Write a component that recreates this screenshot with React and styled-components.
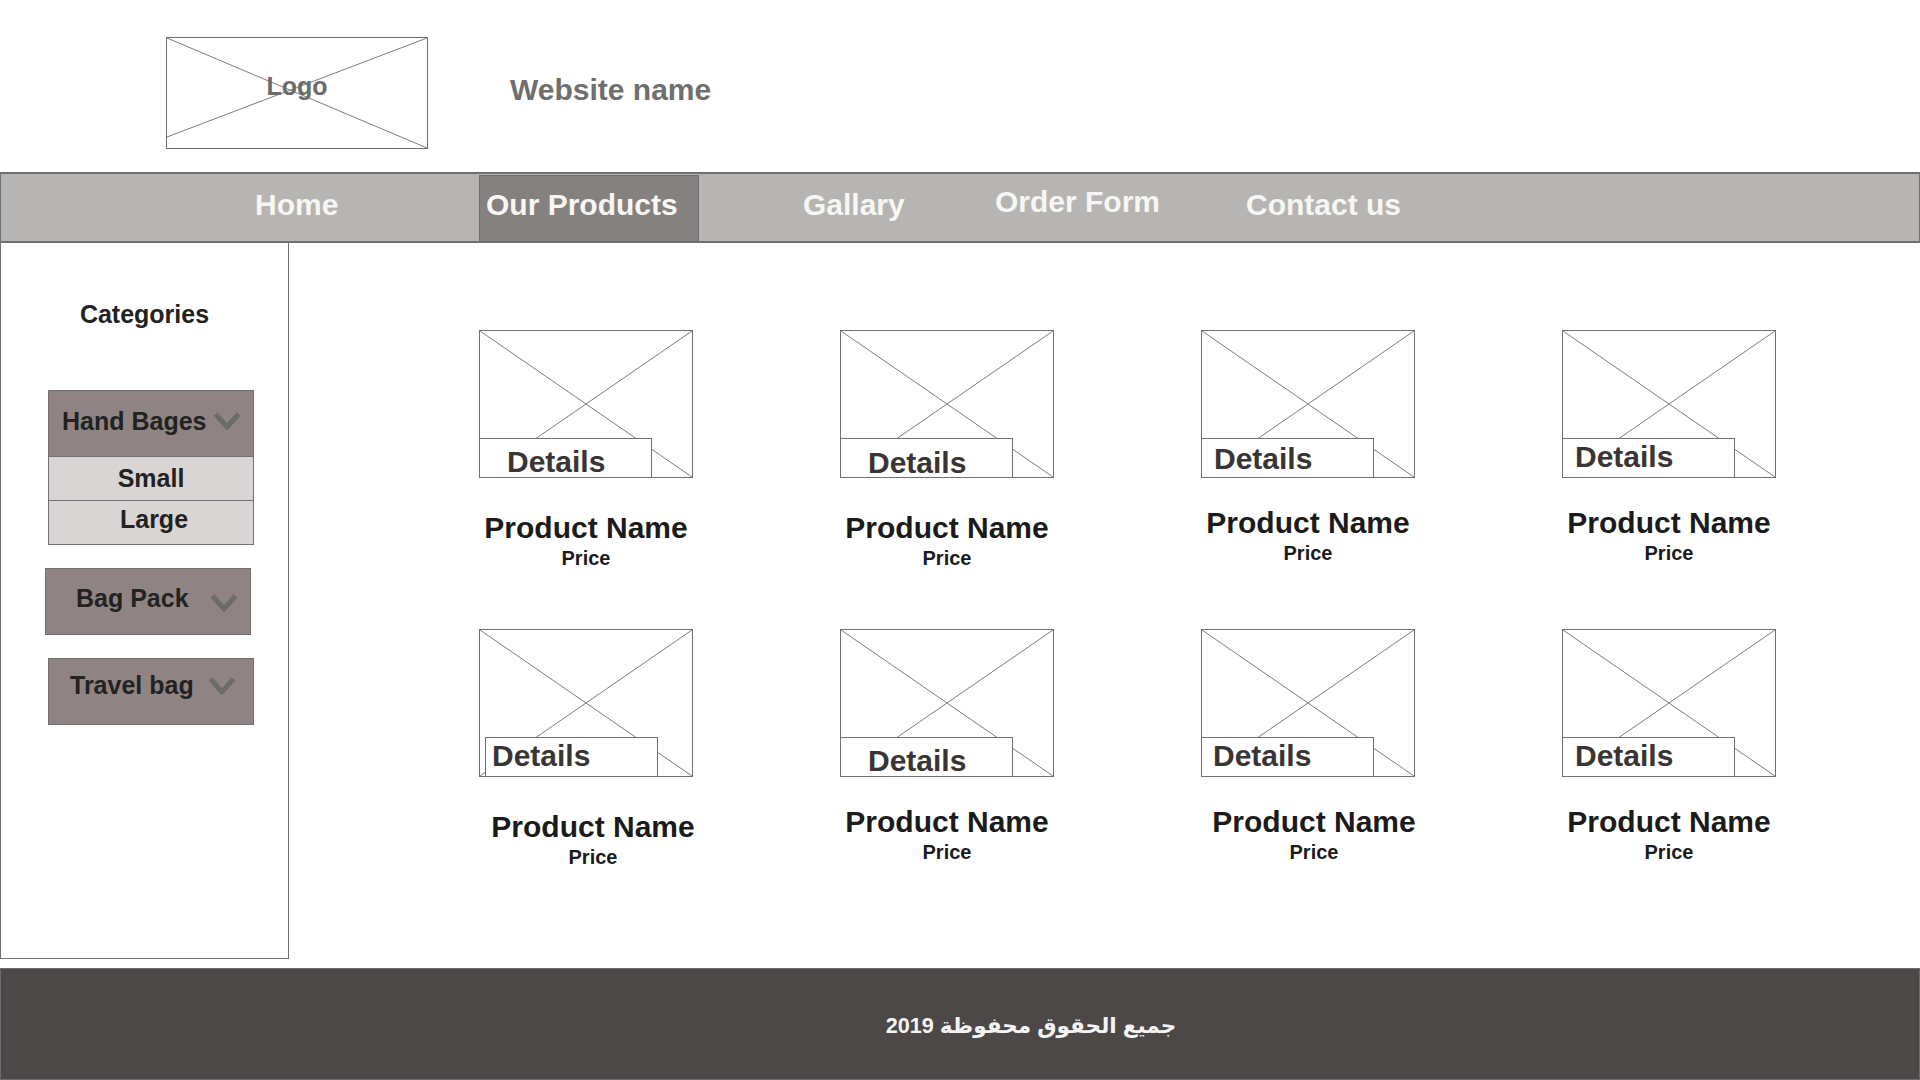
import React from 'react';
import styled, { createGlobalStyle } from 'styled-components';

const GlobalStyle = createGlobalStyle`
  html, body { margin: 0; padding: 0; background: #ffffff; }
  body { font-family: "Liberation Sans", Arial, sans-serif; }
  *, *::before, *::after { box-sizing: border-box; }
`;

const Page = styled.div`
  width: 1920px;
  height: 1080px;
  display: flex;
  flex-direction: column;
  overflow: hidden;
`;

const Header = styled.header`
  height: 172px;
  flex-shrink: 0;
  display: flex;
  align-items: flex-start;
  padding: 37px 0 0 166px;
`;

const LogoBox = styled.div`
  position: relative;
  width: 262px;
  height: 112px;
  border: 1px solid #6e6e6e;
  display: flex;
  align-items: center;
  justify-content: center;
  padding-bottom: 14px;
`;

const CrossSvg = styled.svg`
  position: absolute;
  inset: 0;
  width: 100%;
  height: 100%;
  overflow: visible;
`;

const LogoText = styled.span`
  position: relative;
  font-size: 25px;
  font-weight: 700;
  line-height: 30px;
  color: #6b6b6b;
`;

const SiteName = styled.h1`
  margin: 35.5px 0 0 82px;
  font-size: 30px;
  font-weight: 700;
  line-height: 34px;
  color: #6f6f6f;
  white-space: nowrap;
`;

const NavBar = styled.nav`
  height: 71px;
  flex-shrink: 0;
  display: flex;
  align-items: stretch;
  padding: 1px 0 0 254px;
  background: #b6b5b3;
  border-top: 2px solid #6f6f6f;
  border-bottom: 2px solid #6f6f6f;
  border-left: 1px solid #6f6f6f;
  border-right: 1px solid #6f6f6f;
`;

const NavItem = styled.a`
  display: flex;
  align-items: center;
  flex-shrink: 0;
  width: ${p => (p.$w ? `${p.$w}px` : 'auto')};
  padding-left: ${p => p.$pl || 0}px;
  padding-bottom: ${p => 7 + (p.$raise || 0) * 2}px;
  font-size: 30px;
  font-weight: 700;
  line-height: 34px;
  color: #f7f6f3;
  text-decoration: none;
  white-space: nowrap;
  background: ${p => (p.$active ? '#858180' : 'transparent')};
  border: ${p => (p.$active ? '1px solid #6d6d6d' : '0')};
  border-bottom: 0;
`;

const Main = styled.main`
  display: flex;
  height: 716px;
  flex-shrink: 0;
`;

const Sidebar = styled.aside`
  width: 289px;
  flex-shrink: 0;
  border: 1px solid #707070;
  border-top: 0;
  padding-top: 56px;
  display: flex;
  flex-direction: column;
  align-items: flex-start;
`;

const SideTitle = styled.h2`
  align-self: stretch;
  margin: 0 0 61px;
  text-align: center;
  font-size: 25px;
  font-weight: 700;
  line-height: 30px;
  color: #222222;
`;

const CatGroup = styled.div`
  width: 206px;
  margin-left: ${p => p.$ml}px;
  margin-bottom: 23px;
  border: 1px solid #707070;
  display: flex;
  flex-direction: column;
`;

const CatHead = styled.div`
  height: 65px;
  display: flex;
  align-items: center;
  padding-left: ${p => p.$pl}px;
  padding-right: ${p => p.$pr}px;
  background: #8f8483;
`;

const CatLabel = styled.span`
  font-size: 25px;
  font-weight: 700;
  line-height: 30px;
  color: #222222;
  white-space: nowrap;
  margin-bottom: ${p => p.$lift * 2}px;
`;

const Chevron = styled.svg`
  margin-left: auto;
  flex-shrink: 0;
  margin-bottom: ${p => p.$lift * 2}px;
`;

const SubItem = styled.div`
  height: 44px;
  border-top: 1px solid #707070;
  background: #dad5d5;
  display: flex;
  align-items: center;
  justify-content: center;
  padding-bottom: ${p => p.$lift * 2}px;
  padding-left: ${p => p.$shift * 2}px;
  font-size: 25px;
  font-weight: 700;
  line-height: 30px;
  color: #222222;
`;

const Products = styled.section`
  flex: 1;
  padding: 87px 0 0 190px;
  display: grid;
  grid-template-columns: repeat(4, 214px);
  grid-template-rows: repeat(2, 299px);
  column-gap: 147px;
  align-content: start;
`;

const Card = styled.article`
  display: flex;
  flex-direction: column;
  align-items: center;
`;

const ImageFrame = styled.div`
  position: relative;
  width: 214px;
  height: 148px;
  flex-shrink: 0;
  border: 1px solid #707070;
  background: #ffffff;
`;

const DetailsTag = styled.a`
  position: absolute;
  bottom: -1px;
  left: ${p => p.$x - 1}px;
  width: 173px;
  height: 40px;
  border: 1px solid #707070;
  background: #ffffff;
  padding-left: ${p => p.$pl}px;
  padding-top: ${p => p.$pt}px;
  font-size: 30px;
  font-weight: 700;
  line-height: 30px;
  color: #393535;
  text-decoration: none;
  white-space: nowrap;
`;

const Info = styled.div`
  display: flex;
  flex-direction: column;
  align-items: center;
  margin-top: ${p => p.$gap}px;
  margin-left: ${p => p.$shift * 2}px;
`;

const ProductName = styled.h3`
  margin: 0;
  font-size: 30px;
  font-weight: 700;
  line-height: 35px;
  color: #1b1b1b;
  white-space: nowrap;
`;

const Price = styled.span`
  margin-top: 2px;
  font-size: 20px;
  font-weight: 700;
  line-height: 22px;
  color: #1b1b1b;
`;

const Footer = styled.footer`
  margin-top: 9px;
  height: 112px;
  flex-shrink: 0;
  background: #4c4847;
  border: 1px solid #6c6c6c;
  display: flex;
  align-items: center;
  justify-content: center;
  padding-left: 142px;
  padding-top: 4px;
`;

const FooterText = styled.p`
  margin: 0;
  font-family: "Liberation Sans", "DejaVu Sans", sans-serif;
  font-size: 21.6px;
  font-weight: 700;
  line-height: 26px;
  color: #f4f4f4;
`;

const Cross = ({ skew = 0 }) => (
  <CrossSvg viewBox="0 0 100 100" preserveAspectRatio="none" aria-hidden="true">
    <line x1="0" y1="0" x2="100" y2="100" stroke="#7d7d7d" strokeWidth="1" vectorEffect="non-scaling-stroke" />
    <line x1="100" y1="0" x2="0" y2={100 - skew} stroke="#7d7d7d" strokeWidth="1" vectorEffect="non-scaling-stroke" />
  </CrossSvg>
);

const ChevronIcon = ({ lift }) => (
  <Chevron $lift={lift} width="28" height="18" viewBox="0 0 28 18" aria-hidden="true">
    <polyline points="2.5,2 14,15 25.5,2" fill="none" stroke="#6b6b6b" strokeWidth="5" strokeLinejoin="miter" />
  </Chevron>
);

const navItems = [
  { label: 'Home', w: 224, pl: 0 },
  { label: 'Our Products', w: 220, pl: 6, active: true },
  { label: 'Gallary', w: 296, pl: 104 },
  { label: 'Order Form', w: 251, pl: 0, raise: 3 },
  { label: 'Contact us', pl: 0 },
];

const categories = [
  {
    label: 'Hand Bages', ml: 47, pl: 13, pr: 12, lift: 3, chevLift: 2.5,
    subs: [{ label: 'Small', lift: 1, shift: -1 }, { label: 'Large', lift: 4, shift: 3 }],
  },
  { label: 'Bag Pack', ml: 44, pl: 30, pr: 12, lift: 3.5, chevLift: -1, subs: [] },
  { label: 'Travel bag', ml: 47, pl: 21, pr: 17, lift: 7, chevLift: 5.5, subs: [] },
];

const cards = [
  { x: 0, pl: 27, pt: 7.5, gap: 32, shift: 0 },
  { x: 0, pl: 27, pt: 8.5, gap: 32, shift: 0 },
  { x: 0, pl: 12, pt: 4.5, gap: 27, shift: 0 },
  { x: 0, pl: 12, pt: 2.5, gap: 27, shift: 0 },
  { x: 6, pl: 6, pt: 2.5, gap: 32, shift: 7 },
  { x: 0, pl: 27, pt: 7.5, gap: 27, shift: 0 },
  { x: 0, pl: 11, pt: 2.5, gap: 27, shift: 6 },
  { x: 0, pl: 12, pt: 2.5, gap: 27, shift: 0 },
];

export default function App() {
  return (
    <>
      <GlobalStyle />
      <Page>
        <Header>
          <LogoBox>
            <Cross skew={10} />
            <LogoText>Logo</LogoText>
          </LogoBox>
          <SiteName>Website name</SiteName>
        </Header>

        <NavBar>
          {navItems.map(item => (
            <NavItem
              key={item.label}
              href="#"
              $w={item.w}
              $pl={item.pl}
              $raise={item.raise}
              $active={item.active}
            >
              {item.label}
            </NavItem>
          ))}
        </NavBar>

        <Main>
          <Sidebar>
            <SideTitle>Categories</SideTitle>
            {categories.map(cat => (
              <CatGroup key={cat.label} $ml={cat.ml}>
                <CatHead $pl={cat.pl} $pr={cat.pr}>
                  <CatLabel $lift={cat.lift}>{cat.label}</CatLabel>
                  <ChevronIcon lift={cat.chevLift} />
                </CatHead>
                {cat.subs.map(s => (
                  <SubItem key={s.label} $lift={s.lift} $shift={s.shift}>{s.label}</SubItem>
                ))}
              </CatGroup>
            ))}
          </Sidebar>

          <Products>
            {cards.map((c, i) => (
              <Card key={i}>
                <ImageFrame>
                  <Cross />
                  <DetailsTag href="#" $x={c.x} $pl={c.pl} $pt={c.pt}>
                    Details
                  </DetailsTag>
                </ImageFrame>
                <Info $gap={c.gap} $shift={c.shift}>
                  <ProductName>Product Name</ProductName>
                  <Price>Price</Price>
                </Info>
              </Card>
            ))}
          </Products>
        </Main>

        <Footer>
          <FooterText dir="rtl">جميع الحقوق محفوظة 2019</FooterText>
        </Footer>
      </Page>
    </>
  );
}
